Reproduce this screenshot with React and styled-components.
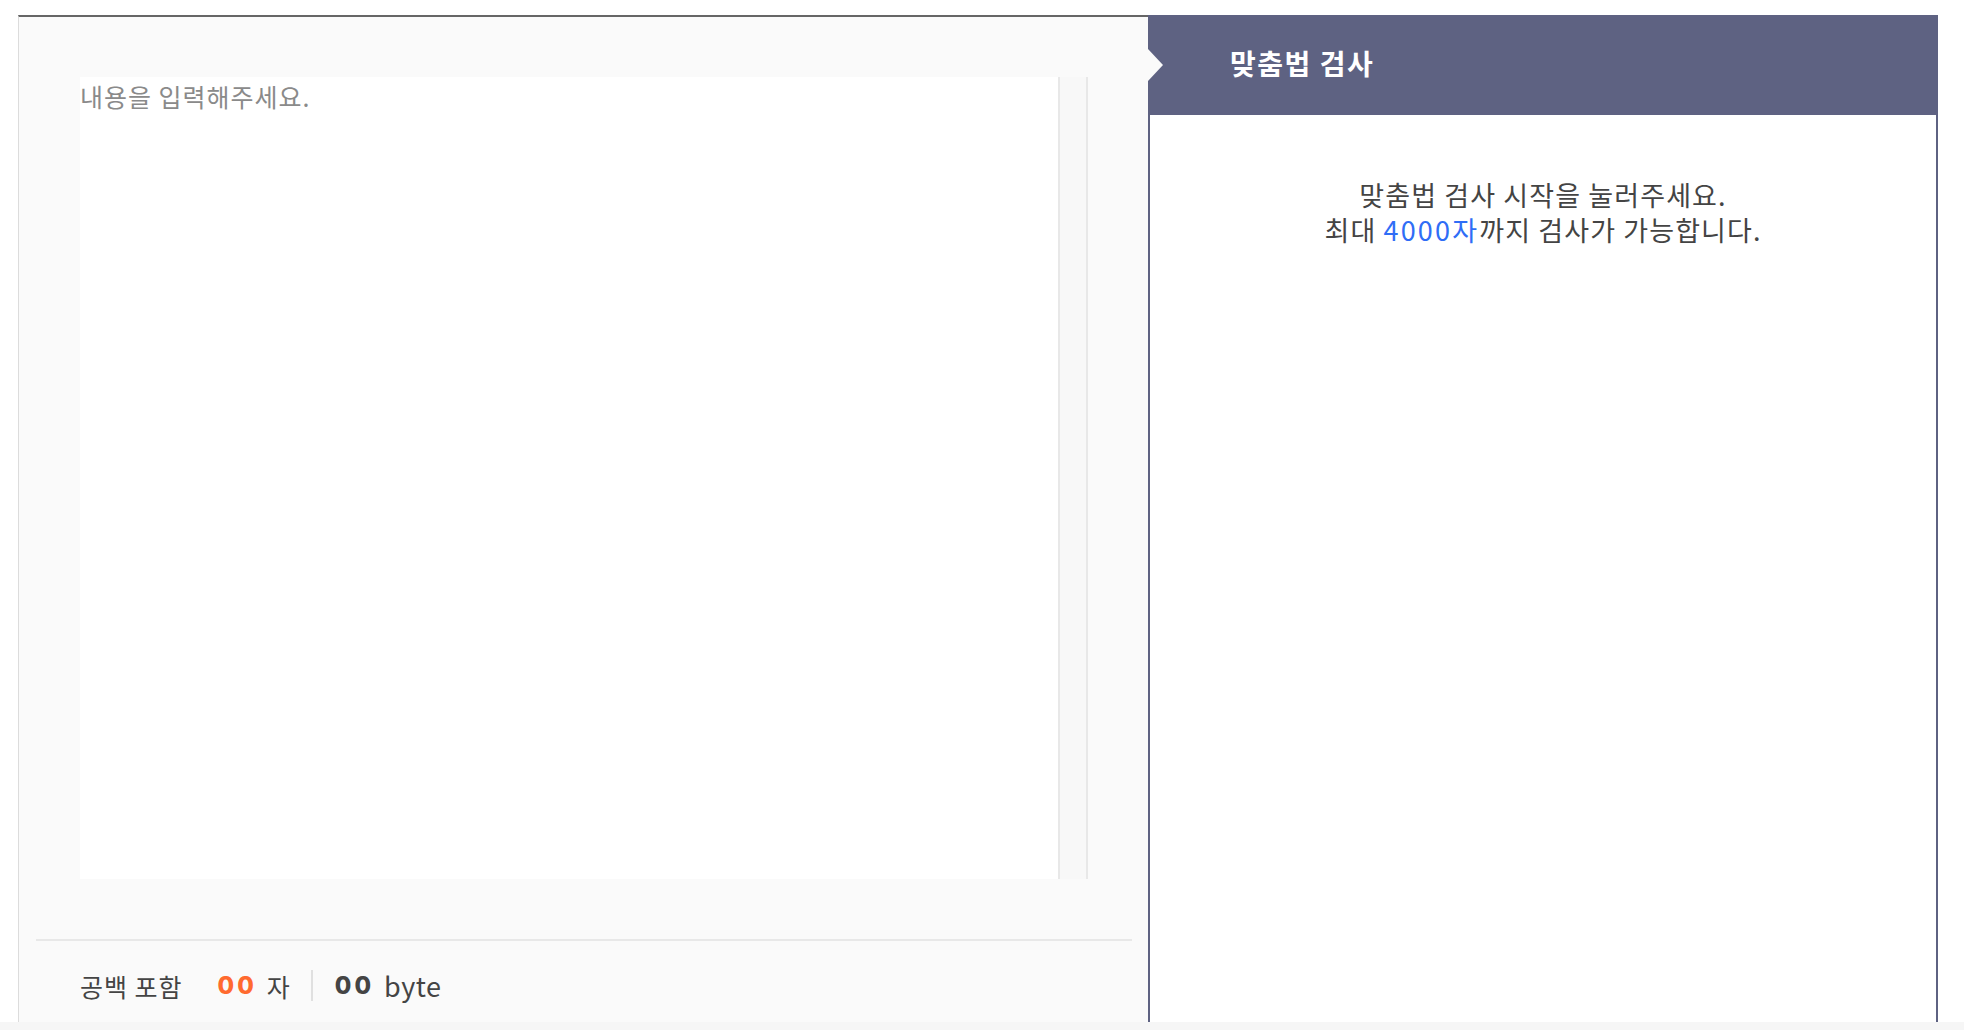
import React from "react";
import styled, { createGlobalStyle } from "styled-components";

const GlobalStyle = createGlobalStyle`
  * { box-sizing: border-box; }
  html, body { margin: 0; padding: 0; background: #ffffff; }
  body {
    font-family: "Noto Sans CJK KR", "Noto Sans", sans-serif;
    color: #444;
  }
`;

const Page = styled.div`
  width: 1964px;
  height: 1030px;
  display: flex;
  flex-direction: column;
  overflow: hidden;
`;

const Main = styled.div`
  display: flex;
  padding: 15px 0 0 18px;
  height: 1022px;
`;

const LeftPanel = styled.section`
  width: 1130px;
  display: flex;
  flex-direction: column;
  background: #fafafa;
  border-left: 1px solid #dcdcdc;
  border-top: 2px solid #666666;
`;

const EditorWrap = styled.div`
  padding: 60px 60px 0 61px;
`;

const Editor = styled.div`
  display: flex;
  height: 802px;
`;

const TextArea = styled.textarea`
  flex: 1;
  border: none;
  outline: none;
  resize: none;
  background: #ffffff;
  padding: 2px 0 0 0;
  margin: 0;
  font-family: "Noto Sans CJK KR", "Noto Sans", sans-serif;
  font-size: 25px;
  letter-spacing: 1px;
  line-height: 34px;
  color: #333;
  &::placeholder {
    color: #8a8a8a;
  }
`;

const ScrollTrack = styled.div`
  width: 30px;
  background: #f8f8f8;
  border-left: 2px solid #e8e8e8;
  border-right: 2px solid #e8e8e8;
`;

const Divider = styled.div`
  height: 2px;
  background: #e8e8e8;
  margin: 60px 16px 0 17px;
`;

const Footer = styled.div`
  flex: 1;
  display: flex;
  align-items: center;
  padding: 8px 0 0 61px;
  font-size: 25px;
  letter-spacing: 1px;
  color: #444;
`;

const Label = styled.span`
  margin-right: 35px;
`;

const Count = styled.span`
  font-family: "Inter", "Liberation Sans", sans-serif;
  font-weight: 800;
  font-size: 24px;
  letter-spacing: 3px;
  color: ${(p) => p.$color || "#444"};
  margin-right: 10px;
`;

const Unit = styled.span`
  font-size: ${(p) => p.$size || "25px"};
  letter-spacing: ${(p) => (p.$latin ? "0.5px" : "1px")};
`;

const Sep = styled.span`
  width: 2px;
  height: 31px;
  background: #e0e0e0;
  margin: 0 22px 0 20px;
`;

const RightPanel = styled.section`
  position: relative;
  width: 790px;
  display: flex;
  flex-direction: column;
  background: #ffffff;
  border-left: 2px solid #5e6282;
  border-right: 2px solid #5e6282;
`;

const Header = styled.header`
  height: 100px;
  background: #5e6282;
  color: #ffffff;
  display: flex;
  align-items: center;
  padding: 0 0 4px 80px;
  font-size: 28px;
  letter-spacing: 1.5px;
  font-weight: 700;
`;

const Arrow = styled.span`
  position: absolute;
  left: -2px;
  top: 34px;
  width: 0;
  height: 0;
  border-top: 16px solid transparent;
  border-bottom: 16px solid transparent;
  border-left: 15px solid #fafafa;
`;

const Notice = styled.p`
  margin: 62px 0 0;
  text-align: center;
  font-size: 27px;
  letter-spacing: 1.1px;
  line-height: 35px;
  color: #444;
`;

const Highlight = styled.span`
  color: #2f6df6;
  letter-spacing: 2.2px;
`;

const BottomStrip = styled.div`
  height: 8px;
  background: #f6f6f6;
`;

export default function App() {
  return (
    <>
      <GlobalStyle />
      <Page>
        <Main>
          <LeftPanel>
            <EditorWrap>
              <Editor>
                <TextArea placeholder="내용을 입력해주세요." />
                <ScrollTrack />
              </Editor>
            </EditorWrap>
            <Divider />
            <Footer>
              <Label>공백 포함</Label>
              <Count $color="#ff6a2f">00</Count>
              <Unit>자</Unit>
              <Sep />
              <Count $color="#444">00</Count>
              <Unit $size="27px" $latin>byte</Unit>
            </Footer>
          </LeftPanel>
          <RightPanel>
            <Arrow />
            <Header>맞춤법 검사</Header>
            <Notice>
              맞춤법 검사 시작을 눌러주세요.
              <br />
              최대 <Highlight>4000자</Highlight>까지 검사가 가능합니다.
            </Notice>
          </RightPanel>
        </Main>
        <BottomStrip />
      </Page>
    </>
  );
}
